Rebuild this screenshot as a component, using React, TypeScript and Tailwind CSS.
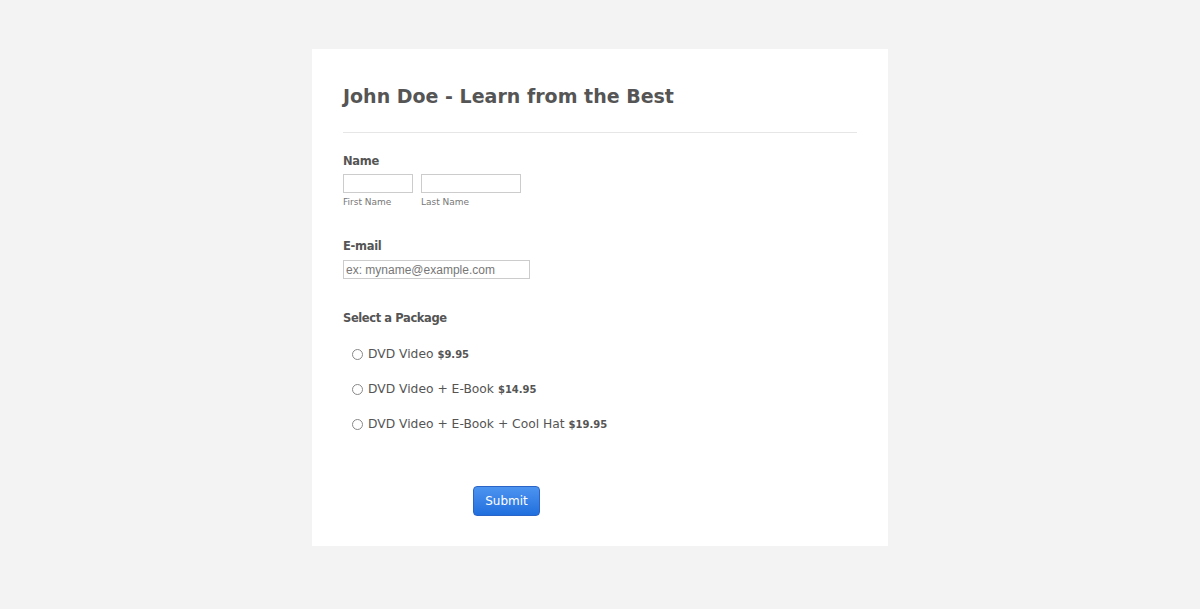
const packages = [
  { name: "DVD Video", price: "$9.95" },
  { name: "DVD Video + E-Book", price: "$14.95" },
  { name: "DVD Video + E-Book + Cool Hat", price: "$19.95" },
];

const App = () => {
  return (
    <div className="flex min-h-[609px] justify-center bg-[#f3f3f3] pt-[49px] font-['DejaVu_Sans',sans-serif] text-[#555]">
      <div className="h-[497px] w-[576px] bg-white px-[31px]">
        <h1 className="pt-[34px] text-[19px] leading-[26px] font-bold text-[#555]">
          John Doe - Learn from the Best
        </h1>
        <div className="mt-[23px] h-px bg-[#e6e6e6]" />

        <div className="mt-[20px]">
          <div className="text-[11.5px] leading-[16px] font-bold tracking-[-0.3px]">Name</div>
          <div className="mt-[5px] flex gap-[8px]">
            <div className="flex flex-col">
              <input className="h-[19px] w-[70px] border border-[#ccc] bg-white" />
              <span className="mt-[2px] text-[9px] leading-[14px] text-[#777]">First Name</span>
            </div>
            <div className="flex flex-col">
              <input className="h-[19px] w-[100px] border border-[#ccc] bg-white" />
              <span className="mt-[2px] text-[9px] leading-[14px] text-[#777]">Last Name</span>
            </div>
          </div>
        </div>

        <div className="mt-[29px]">
          <div className="text-[11.5px] leading-[16px] font-bold tracking-[-0.3px]">E-mail</div>
          <input
            className="mt-[6px] h-[19px] w-[187px] border border-[#ccc] bg-white px-[2px] font-['Liberation_Sans',sans-serif] text-[12px] text-[#555] placeholder:text-[#777]"
            placeholder="ex: myname@example.com"
          />
        </div>

        <div className="mt-[29px]">
          <div className="text-[11.5px] leading-[16px] font-bold tracking-[-0.4px]">Select a Package</div>
          <div className="mt-[20px] flex flex-col gap-[17px] pl-[9px]">
            {packages.map((p) => (
              <label key={p.name} className="flex h-[18px] items-center gap-[5px] text-[12.3px]">
                <span className="h-[11px] w-[11px] rounded-full border border-[#888] bg-white" />
                <span>
                  {p.name} <span className="text-[10px] font-bold">{p.price}</span>
                </span>
              </label>
            ))}
          </div>
        </div>

        <div className="mt-[52px] pl-[130px]">
          <button className="h-[30px] w-[67px] rounded-[4px] border border-[#2a64c6] bg-gradient-to-b from-[#4d94f0] to-[#1f6fde] text-[12px] text-white">
            Submit
          </button>
        </div>
      </div>
    </div>
  );
};

export default App;
